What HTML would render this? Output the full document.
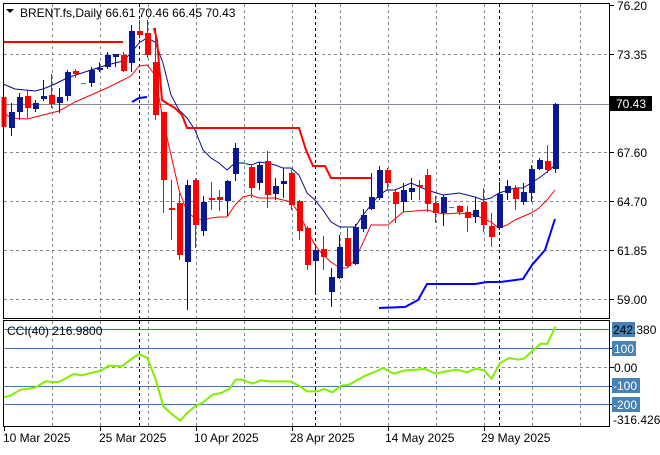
<!DOCTYPE html>
<html><head><meta charset="utf-8"><style>
html,body{margin:0;padding:0;background:#fff;}
body{width:660px;height:450px;overflow:hidden;font-family:"Liberation Sans",sans-serif;}
svg text{font-family:"Liberation Sans",sans-serif;font-size:12px;}
</style></head><body>
<svg width="660" height="450" xmlns="http://www.w3.org/2000/svg">
<g stroke="#7f8a95" stroke-dasharray="3,3" stroke-width="1" fill="none">
<path d="M4 54.5H609M4 152.5H609M4 201.5H609M4 250.5H609M4 299.5H609"/>
<path d="M52.5 4V318M100.5 4V318M148.5 4V318M196.5 4V318M244.5 4V318M292.5 4V318M340.5 4V318M388.5 4V318M436.5 4V318M484.5 4V318M532.5 4V318M580.5 4V318"/>
<path d="M52.5 321V426M100.5 321V426M148.5 321V426M196.5 321V426M244.5 321V426M292.5 321V426M340.5 321V426M388.5 321V426M436.5 321V426M484.5 321V426M532.5 321V426M580.5 321V426"/>
<path d="M4 367.5H609"/>
</g>
<g stroke="#000" stroke-dasharray="3,3" fill="none">
<path d="M139.5 4V318M315.5 4V318M499.5 4V318M139.5 321V426M315.5 321V426M499.5 321V426"/>
</g>
<path d="M4 104.5H609" stroke="#7f8a95"/>
<!-- candles -->
<g id="c"></g>
<g stroke-width="1">
<!-- data candles as wick + body -->
</g>
<g fill="none" stroke-width="1">
<polyline stroke="#0a0a8c" points="3,84 15,89 35,91 43,89 55,84 67,78 91,70 107,65 123,61 131,53 139,43 147,38 155,42 163,63 171,95 179,110 187,118 195,130 203,150 211,158 219,163 227,170 235,163 243,163 251,165 259,162 267,163 275,165 283,168 291,168 299,175 307,193 315,200 323,210 331,222 340,227 355,227 363,215 371,205 379,195 387,190 395,190 411,183 427,190 443,195 459,193 475,197 483,200 491,198 499,193 515,188 523,188 531,183 539,178 547,172 555,165"/>
<polyline stroke="#ff0000" points="3,112 11,118 27,119 43,115 59,111 75,102 91,95 107,88 123,80 131,76 139,66 147,65 155,75 163,120 171,155 179,190 187,212 195,218 203,220 211,218 219,217 227,217 235,205 243,197 251,195 259,198 275,198 283,200 291,202 299,213 307,230 315,245 323,255 331,262 340,268 347,268 355,260 371,225 388,225 403,212 427,210 443,214 459,213 475,215 491,222 499,228 507,225 515,220 531,213 539,208 547,200 555,190"/>
<polyline stroke="#ff0000" stroke-width="2" points="3,42 123,42"/>
<polyline stroke="#ff0000" stroke-width="2" points="154,28 157,40 162,100 168,104 175,108 182,115 187,128 299,128 306,150 313,166 325,166 331,178 371,178"/>
<polyline stroke="#0000ff" stroke-width="2" points="132,102 139,98 147,97"/>
<polyline stroke="#0000ff" stroke-width="2" points="379,308 405,307 418,300 427,284 475,284 487,282 500,282 523,279 532,265 545,250 555,219"/>
</g>
<g id="candles">
<!-- x, o/c top, bottom, wick high, low -->
</g>
<g stroke-width="1">
<line x1="4" y1="97" x2="4" y2="127" stroke="#f00" stroke-width="5"/>
<line x1="11.5" y1="103" x2="11.5" y2="136" stroke="#0000cc"/><rect x="9" y="112" width="6" height="16" fill="#0a1a96"/>
<line x1="19.5" y1="93" x2="19.5" y2="120" stroke="#0000cc"/><rect x="17" y="97" width="6" height="15" fill="#0a1a96"/>
<line x1="27.5" y1="91" x2="27.5" y2="118" stroke="#f00"/><rect x="25" y="96" width="6" height="12" fill="#f00"/>
<line x1="35.5" y1="100" x2="35.5" y2="112" stroke="#0000cc"/><rect x="33" y="103" width="6" height="6" fill="#0a1a96"/>
<line x1="43.5" y1="80" x2="43.5" y2="101" stroke="#0000cc"/><rect x="41" y="96" width="6" height="3" fill="#0a1a96"/>
<line x1="51.5" y1="74" x2="51.5" y2="108" stroke="#f00"/><rect x="49" y="95" width="6" height="9" fill="#f00"/>
<line x1="59.5" y1="88" x2="59.5" y2="113" stroke="#0000cc"/><rect x="57" y="97" width="6" height="6" fill="#0a1a96"/>
<line x1="67.5" y1="70" x2="67.5" y2="101" stroke="#0000cc"/><rect x="65" y="72" width="6" height="24" fill="#0a1a96"/>
<line x1="75.5" y1="69" x2="75.5" y2="78" stroke="#f00"/><rect x="73" y="71" width="6" height="3" fill="#f00"/>
<line x1="81" y1="83.5" x2="86" y2="83.5" stroke="#0c0"/>
<line x1="91.5" y1="67" x2="91.5" y2="87" stroke="#0000cc"/><rect x="89" y="70" width="6" height="13" fill="#0a1a96"/>
<line x1="99.5" y1="62" x2="99.5" y2="72" stroke="#0000cc"/><rect x="97" y="68" width="6" height="2" fill="#0a1a96"/>
<line x1="107.5" y1="52" x2="107.5" y2="69" stroke="#0000cc"/><rect x="105" y="55" width="6" height="12" fill="#0a1a96"/>
<line x1="115.5" y1="54" x2="115.5" y2="67" stroke="#0000cc"/><rect x="113" y="54" width="6" height="3" fill="#0a1a96"/>
<line x1="123.5" y1="52" x2="123.5" y2="72" stroke="#f00"/><rect x="121" y="55" width="6" height="16" fill="#f00"/>
<line x1="131.5" y1="25" x2="131.5" y2="72" stroke="#0000cc"/><rect x="129" y="31" width="6" height="32" fill="#0a1a96"/>
<line x1="139.5" y1="20" x2="139.5" y2="38" stroke="#f00"/><rect x="137" y="31" width="6" height="4" fill="#f00"/>
<line x1="147.5" y1="20" x2="147.5" y2="58" stroke="#f00"/><rect x="145" y="33" width="6" height="22" fill="#f00"/>
<line x1="155.5" y1="28" x2="155.5" y2="120" stroke="#f00"/><rect x="153" y="62" width="6" height="53" fill="#f00"/>
<line x1="163.5" y1="112" x2="163.5" y2="213" stroke="#f00"/><rect x="161" y="112" width="6" height="68" fill="#f00"/>
<line x1="171.5" y1="180" x2="171.5" y2="240" stroke="#f00"/><rect x="169" y="208" width="6" height="2" fill="#f00"/>
<line x1="179.5" y1="193" x2="179.5" y2="260" stroke="#f00"/><rect x="177" y="203" width="6" height="52" fill="#f00"/>
<line x1="187.5" y1="180" x2="187.5" y2="310" stroke="#0000cc"/><rect x="185" y="185" width="6" height="77" fill="#0a1a96"/>
<line x1="195.5" y1="178" x2="195.5" y2="248" stroke="#f00"/><rect x="193" y="180" width="6" height="45" fill="#f00"/>
<line x1="203.5" y1="196" x2="203.5" y2="236" stroke="#0000cc"/><rect x="201" y="202" width="6" height="29" fill="#0a1a96"/>
<line x1="211.5" y1="182" x2="211.5" y2="210" stroke="#f00"/><rect x="209" y="198" width="6" height="2" fill="#f00"/>
<line x1="219.5" y1="190" x2="219.5" y2="211" stroke="#f00"/><rect x="217" y="197" width="6" height="3" fill="#f00"/>
<line x1="227.5" y1="180" x2="227.5" y2="216" stroke="#0000cc"/><rect x="225" y="181" width="6" height="20" fill="#0a1a96"/>
<line x1="235.5" y1="143" x2="235.5" y2="181" stroke="#0000cc"/><rect x="233" y="148" width="6" height="26" fill="#0a1a96"/>
<line x1="241" y1="163.5" x2="246" y2="163.5" stroke="#0c0"/>
<line x1="251.5" y1="165" x2="251.5" y2="198" stroke="#f00"/><rect x="249" y="167" width="6" height="21" fill="#f00"/>
<line x1="259.5" y1="162" x2="259.5" y2="190" stroke="#0000cc"/><rect x="257" y="165" width="6" height="18" fill="#0a1a96"/>
<line x1="267.5" y1="151" x2="267.5" y2="208" stroke="#f00"/><rect x="265" y="161" width="6" height="34" fill="#f00"/>
<line x1="275.5" y1="178" x2="275.5" y2="200" stroke="#0000cc"/><rect x="273" y="186" width="6" height="8" fill="#0a1a96"/>
<line x1="283.5" y1="168" x2="283.5" y2="198" stroke="#0000cc"/><rect x="281" y="181" width="6" height="3" fill="#0a1a96"/>
<line x1="291.5" y1="170" x2="291.5" y2="210" stroke="#f00"/><rect x="289" y="173" width="6" height="32" fill="#f00"/>
<line x1="299.5" y1="200" x2="299.5" y2="240" stroke="#f00"/><rect x="297" y="201" width="6" height="30" fill="#f00"/>
<line x1="307.5" y1="226" x2="307.5" y2="270" stroke="#f00"/><rect x="305" y="228" width="6" height="37" fill="#f00"/>
<line x1="315.5" y1="245" x2="315.5" y2="295" stroke="#0000cc"/><rect x="313" y="250" width="6" height="11" fill="#0a1a96"/>
<line x1="323.5" y1="236" x2="323.5" y2="270" stroke="#f00"/><rect x="321" y="249" width="6" height="8" fill="#f00"/>
<line x1="331.5" y1="268" x2="331.5" y2="307" stroke="#0000cc"/><rect x="329" y="277" width="6" height="15" fill="#0a1a96"/>
<line x1="339.5" y1="235" x2="339.5" y2="279" stroke="#0000cc"/><rect x="337" y="247" width="6" height="31" fill="#0a1a96"/>
<line x1="347.5" y1="228" x2="347.5" y2="268" stroke="#f00"/><rect x="345" y="238" width="6" height="28" fill="#f00"/>
<line x1="355.5" y1="224" x2="355.5" y2="265" stroke="#0000cc"/><rect x="353" y="227" width="6" height="37" fill="#0a1a96"/>
<line x1="363.5" y1="209" x2="363.5" y2="232" stroke="#0000cc"/><rect x="361" y="215" width="6" height="14" fill="#0a1a96"/>
<line x1="371.5" y1="173" x2="371.5" y2="210" stroke="#0000cc"/><rect x="369" y="197" width="6" height="12" fill="#0a1a96"/>
<line x1="379.5" y1="166" x2="379.5" y2="200" stroke="#0000cc"/><rect x="377" y="170" width="6" height="28" fill="#0a1a96"/>
<line x1="387.5" y1="168" x2="387.5" y2="190" stroke="#f00"/><rect x="385" y="170" width="6" height="13" fill="#f00"/>
<line x1="395.5" y1="190" x2="395.5" y2="223" stroke="#f00"/><rect x="393" y="192" width="6" height="12" fill="#f00"/>
<line x1="403.5" y1="183" x2="403.5" y2="212" stroke="#0000cc"/><rect x="401" y="190" width="6" height="12" fill="#0a1a96"/>
<line x1="411.5" y1="178" x2="411.5" y2="200" stroke="#0000cc"/><rect x="409" y="188" width="6" height="4" fill="#0a1a96"/>
<line x1="419.5" y1="180" x2="419.5" y2="200" stroke="#f00"/><rect x="417" y="185" width="6" height="2" fill="#f00"/>
<line x1="427.5" y1="169" x2="427.5" y2="212" stroke="#f00"/><rect x="425" y="175" width="6" height="29" fill="#f00"/>
<line x1="435.5" y1="196" x2="435.5" y2="223" stroke="#f00"/><rect x="433" y="203" width="6" height="10" fill="#f00"/>
<line x1="443.5" y1="195" x2="443.5" y2="226" stroke="#0000cc"/><rect x="441" y="197" width="6" height="16" fill="#0a1a96"/>
<line x1="449" y1="207.5" x2="454" y2="207.5" stroke="#0c0"/>
<line x1="459.5" y1="205" x2="459.5" y2="215" stroke="#f00"/><rect x="457" y="206" width="6" height="6" fill="#f00"/>
<line x1="467.5" y1="206" x2="467.5" y2="232" stroke="#f00"/><rect x="465" y="212" width="6" height="6" fill="#f00"/>
<line x1="475.5" y1="197" x2="475.5" y2="223" stroke="#0000cc"/><rect x="473" y="210" width="6" height="7" fill="#0a1a96"/>
<line x1="483.5" y1="188" x2="483.5" y2="232" stroke="#f00"/><rect x="481" y="202" width="6" height="23" fill="#f00"/>
<line x1="491.5" y1="213" x2="491.5" y2="247" stroke="#f00"/><rect x="489" y="226" width="6" height="11" fill="#f00"/>
<line x1="499.5" y1="182" x2="499.5" y2="230" stroke="#0000cc"/><rect x="497" y="194" width="6" height="34" fill="#0a1a96"/>
<line x1="507.5" y1="180" x2="507.5" y2="200" stroke="#0000cc"/><rect x="505" y="186" width="6" height="7" fill="#0a1a96"/>
<line x1="515.5" y1="185" x2="515.5" y2="210" stroke="#f00"/><rect x="513" y="188" width="6" height="11" fill="#f00"/>
<line x1="523.5" y1="183" x2="523.5" y2="205" stroke="#0000cc"/><rect x="521" y="192" width="6" height="10" fill="#0a1a96"/>
<line x1="531.5" y1="165" x2="531.5" y2="202" stroke="#0000cc"/><rect x="529" y="169" width="6" height="24" fill="#0a1a96"/>
<line x1="539.5" y1="158" x2="539.5" y2="170" stroke="#0000cc"/><rect x="537" y="160" width="6" height="9" fill="#0a1a96"/>
<line x1="547.5" y1="145" x2="547.5" y2="173" stroke="#f00"/><rect x="545" y="161" width="6" height="9" fill="#f00"/>
<line x1="555.5" y1="103" x2="555.5" y2="173" stroke="#0000cc"/><rect x="553" y="104" width="6" height="65" fill="#0a1a96"/>
</g>
<!-- CCI levels -->
<g stroke="#3d7ab5" stroke-width="1">
<path d="M4 329.5H609M4 348.5H609M4 386.5H609M4 404.5H609"/>
</g>
<g transform="translate(0,348) scale(0.4209,0.3333) translate(0,-115)">
<polyline fill="none" stroke="#80f000" stroke-width="2" vector-effect="non-scaling-stroke" points="8,263 25,258 48,240 70,237 85,233 108,215 125,217 140,217 155,207 175,193 195,197 215,190 240,183 258,168 290,170 310,150 330,133 350,145 370,210 388,290 405,310 428,333 445,310 463,290 480,280 505,255 525,250 545,238 560,210 575,210 600,222 620,212 640,215 690,215 710,228 730,245 755,245 770,238 790,248 810,228 830,225 850,210 870,197 890,187 910,175 935,192 960,183 990,180 1010,178 1035,192 1060,185 1085,180 1110,188 1130,177 1150,182 1168,207 1188,160 1210,145 1230,150 1245,147 1270,118 1285,102 1300,103 1320,50"/>
</g>
<!-- borders -->
<rect x="3.5" y="3.5" width="606" height="315" fill="none" stroke="#000"/>
<rect x="3.5" y="320.5" width="606" height="106" fill="none" stroke="#000"/>
<g stroke="#000"><path d="M610 5.5H614M610 54.5H614M610 152.5H614M610 201.5H614M610 250.5H614M610 299.5H614M610 348.5H614M610 367.5H614M610 386.5H614M610 404.5H614"/>
<path d="M4.5 427V431M100.5 427V431M196.5 427V431M292.5 427V431M388.5 427V431M484.5 427V431"/></g>
<!-- labels -->
<path d="M6 9l4 4 4-4z" fill="#000"/>
<text x="20" y="17">BRENT.fs,Daily  66.61 70.46 66.45 70.43</text>
<g font-size="12">
<text x="617" y="10">76.20</text>
<text x="617" y="59">73.35</text>
<rect x="610" y="96" width="42" height="15" fill="#000"/>
<text x="616" y="108" fill="#fff">70.43</text>
<text x="617" y="157">67.60</text>
<text x="617" y="206">64.70</text>
<text x="617" y="255">61.85</text>
<text x="617" y="304">59.00</text>
<rect x="612" y="322" width="23" height="15" fill="#4682b4"/>
<text x="613" y="334">242.380</text>
<rect x="612" y="341" width="24" height="15" fill="#4682b4"/>
<text x="614" y="353" fill="#fff">100</text>
<text x="614" y="372">0.00</text>
<rect x="612" y="378" width="28" height="15" fill="#4682b4"/>
<text x="613" y="390" fill="#fff">-100</text>
<rect x="612" y="397" width="28" height="15" fill="#4682b4"/>
<text x="613" y="409" fill="#fff">-200</text>
<text x="613" y="424">-316.426</text>
<text x="7" y="335">CCI(40) 216.9800</text>
<text x="3" y="442">10 Mar 2025</text>
<text x="99" y="442">25 Mar 2025</text>
<text x="194" y="442">10 Apr 2025</text>
<text x="290" y="442">28 Apr 2025</text>
<text x="385" y="442">14 May 2025</text>
<text x="481" y="442">29 May 2025</text>
</g>
</svg>
</body></html>
